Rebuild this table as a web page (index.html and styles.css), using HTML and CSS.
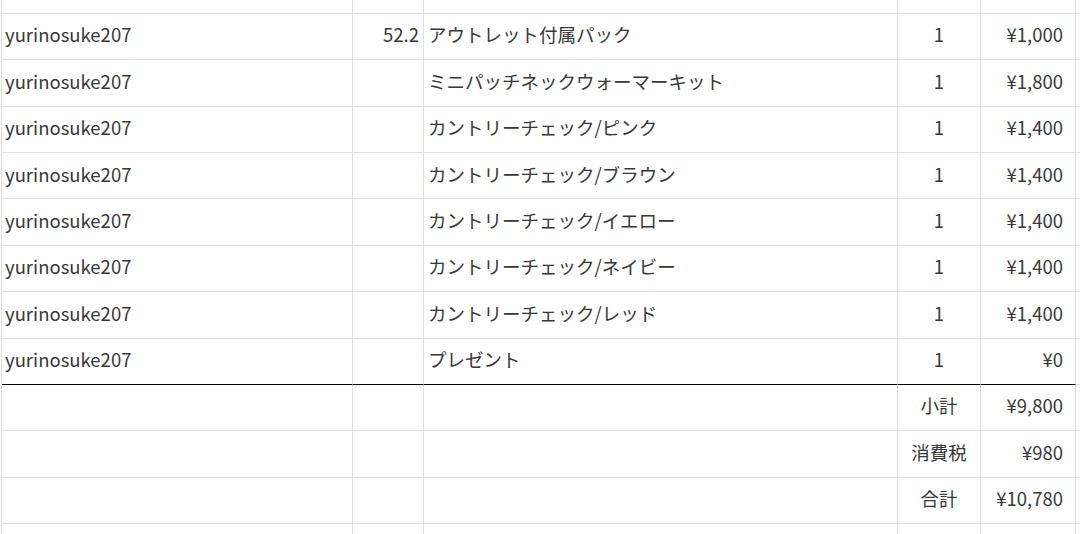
FILE: index.html
```html
<!DOCTYPE html>
<html lang="ja">
<head>
<meta charset="utf-8">
<link rel="stylesheet" href="styles.css">
</head>
<body>
<div class="sheet">
  <div class="row top"><div class="c c1"></div><div class="c c2"></div><div class="c c3"></div><div class="c c4"></div><div class="c c5"></div><div class="c c6"></div></div>
  <div class="row"><div class="c c1">yurinosuke207</div><div class="c c2">52.2</div><div class="c c3">アウトレット付属パック</div><div class="c c4">1</div><div class="c c5">¥1,000</div><div class="c c6"></div></div>
  <div class="row"><div class="c c1">yurinosuke207</div><div class="c c2"></div><div class="c c3">ミニパッチネックウォーマーキット</div><div class="c c4">1</div><div class="c c5">¥1,800</div><div class="c c6"></div></div>
  <div class="row"><div class="c c1">yurinosuke207</div><div class="c c2"></div><div class="c c3">カントリーチェック/ピンク</div><div class="c c4">1</div><div class="c c5">¥1,400</div><div class="c c6"></div></div>
  <div class="row"><div class="c c1">yurinosuke207</div><div class="c c2"></div><div class="c c3">カントリーチェック/ブラウン</div><div class="c c4">1</div><div class="c c5">¥1,400</div><div class="c c6"></div></div>
  <div class="row"><div class="c c1">yurinosuke207</div><div class="c c2"></div><div class="c c3">カントリーチェック/イエロー</div><div class="c c4">1</div><div class="c c5">¥1,400</div><div class="c c6"></div></div>
  <div class="row"><div class="c c1">yurinosuke207</div><div class="c c2"></div><div class="c c3">カントリーチェック/ネイビー</div><div class="c c4">1</div><div class="c c5">¥1,400</div><div class="c c6"></div></div>
  <div class="row"><div class="c c1">yurinosuke207</div><div class="c c2"></div><div class="c c3">カントリーチェック/レッド</div><div class="c c4">1</div><div class="c c5">¥1,400</div><div class="c c6"></div></div>
  <div class="row last"><div class="c c1">yurinosuke207</div><div class="c c2"></div><div class="c c3">プレゼント</div><div class="c c4">1</div><div class="c c5">¥0</div><div class="c c6"></div></div>
  <div class="row"><div class="c c1"></div><div class="c c2"></div><div class="c c3"></div><div class="c c4">小計</div><div class="c c5">¥9,800</div><div class="c c6"></div></div>
  <div class="row"><div class="c c1"></div><div class="c c2"></div><div class="c c3"></div><div class="c c4">消費税</div><div class="c c5">¥980</div><div class="c c6"></div></div>
  <div class="row"><div class="c c1"></div><div class="c c2"></div><div class="c c3"></div><div class="c c4">合計</div><div class="c c5">¥10,780</div><div class="c c6"></div></div>
  <div class="row bottom"><div class="c c1"></div><div class="c c2"></div><div class="c c3"></div><div class="c c4"></div><div class="c c5"></div><div class="c c6"></div></div>
</div>
</body>
</html>
```

FILE: styles.css
```css
html, body {
  margin: 0;
  padding: 0;
  background: #ffffff;
  overflow: hidden;
}

.sheet {
  width: 1080px;
  height: 534px;
  overflow: hidden;
  font-family: "Noto Sans CJK JP", "Noto Sans", sans-serif;
  font-size: 18.5px;
  color: #383838;
  padding-left: 1px;
  box-sizing: border-box;
}

.row {
  display: grid;
  grid-template-columns: 351px 71px 474px 83px 95px 1fr;
  height: 46.36px;
  border-left: 1px solid #e1e1e1;
}

.row.top {
  height: 14px;
}

.row.bottom {
  height: 20px;
}

.c {
  box-sizing: border-box;
  border-right: 1px solid #e1e1e1;
  border-bottom: 1px solid #e1e1e1;
  display: flex;
  align-items: center;
  white-space: nowrap;
  overflow: hidden;
  padding-bottom: 4px;
  line-height: 1;
}

.c6 {
  border-right: none;
}

.c1 {
  padding-left: 3px;
}

.c2 {
  justify-content: flex-end;
  padding-right: 4px;
}

.c3 {
  padding-left: 4px;
}

.c4 {
  justify-content: center;
}

.c5 {
  justify-content: flex-end;
  padding-right: 12px;
}

.row.last .c1,
.row.last .c2,
.row.last .c3,
.row.last .c4,
.row.last .c5 {
  border-bottom-color: #000000;
}
```
